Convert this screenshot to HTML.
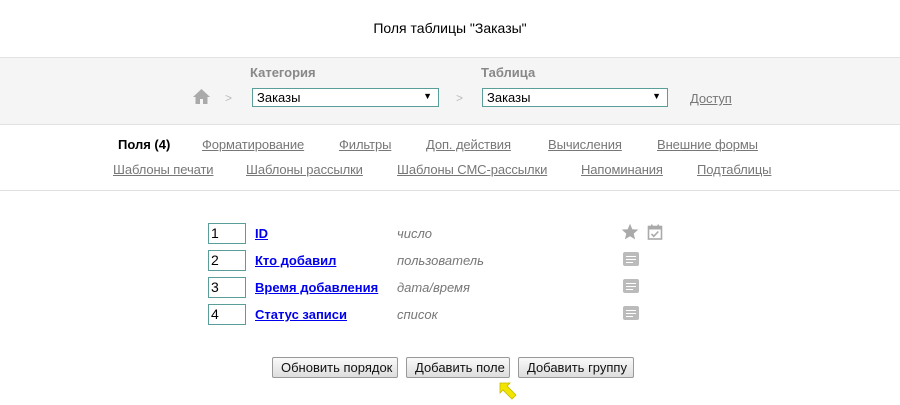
<!DOCTYPE html>
<html><head><meta charset="utf-8"><style>
body{margin:0;width:900px;height:405px;background:#fff;font-family:"Liberation Sans",Arial,sans-serif;position:relative;overflow:hidden}
.a{position:absolute;white-space:nowrap}
.t{font-size:14px;color:#000;left:0;width:900px;text-align:center;top:20px}
.band{left:0;top:57px;width:900px;height:66px;background:#f5f5f5;border-top:1px solid #e2e2e2;border-bottom:1px solid #e2e2e2}
.lbl{font-size:13px;font-weight:bold;color:#888}
.sel{height:19px;border:1px solid #5a9e9a;background:#fff;font-size:13px;box-sizing:border-box;padding:1px 4px}
.sel b{position:absolute;right:6px;top:2px;font-size:9px}
.gt{color:#bbb;font-size:12px}
.lk{font-size:13px;color:#777;text-decoration:underline;letter-spacing:-0.1px}
.hr{left:0;top:190px;width:900px;height:1px;background:#e0e0e0}
.num{width:38px;height:21px;border:1px solid #5a9e9a;box-sizing:border-box;font-size:14px;padding:1px 2px;background:#fff}
.fn{font-size:13px;font-weight:bold;color:#00e;text-decoration:underline}
.ty{font-size:13px;font-style:italic;color:#777}
.btn{height:21px;border:1px solid #999;border-radius:2px;background:linear-gradient(#fafafa,#ddd);font-size:13px;box-sizing:border-box;padding:2px 8px;color:#111}
.nt{width:16px;height:14px;background:#bbb;border-radius:2px}
.nt i{position:absolute;left:3px;height:1px;background:#fff}
</style></head><body>
<div class="a t">Поля таблицы "Заказы"</div>
<div class="a band"></div>
<svg class="a" style="left:193px;top:89px" width="17" height="15" viewBox="0 0 17 15"><path d="M8.5 0L0 8h2.5v7h4.5v-5h3v5h4.5V8H17z" fill="#aaa"/></svg>
<div class="a gt" style="left:225px;top:91px">&gt;</div>
<div class="a lbl" style="left:250px;top:65px">Категория</div>
<div class="a sel" style="left:252px;top:88px;width:187px">Заказы<b>▼</b></div>
<div class="a gt" style="left:456px;top:91px">&gt;</div>
<div class="a lbl" style="left:481px;top:65px">Таблица</div>
<div class="a sel" style="left:482px;top:88px;width:186px">Заказы<b>▼</b></div>
<div class="a lk" style="left:690px;top:91px">Доступ</div>

<div class="a" style="left:118px;top:137px;font-size:13px;font-weight:bold">Поля (4)</div>
<div class="a lk" style="left:202px;top:137px">Форматирование</div>
<div class="a lk" style="left:339px;top:137px">Фильтры</div>
<div class="a lk" style="left:426px;top:137px">Доп. действия</div>
<div class="a lk" style="left:548px;top:137px">Вычисления</div>
<div class="a lk" style="left:657px;top:137px">Внешние формы</div>
<div class="a lk" style="left:113px;top:162px">Шаблоны печати</div>
<div class="a lk" style="left:246px;top:162px">Шаблоны рассылки</div>
<div class="a lk" style="left:397px;top:162px">Шаблоны СМС-рассылки</div>
<div class="a lk" style="left:581px;top:162px">Напоминания</div>
<div class="a lk" style="left:697px;top:162px">Подтаблицы</div>
<div class="a hr"></div>

<div class="a num" style="left:208px;top:223px">1</div>
<div class="a fn" style="left:255px;top:226px">ID</div>
<div class="a ty" style="left:397px;top:226px">число</div>
<div class="a num" style="left:208px;top:250px">2</div>
<div class="a fn" style="left:255px;top:253px">Кто добавил</div>
<div class="a ty" style="left:397px;top:253px">пользователь</div>
<div class="a num" style="left:208px;top:277px">3</div>
<div class="a fn" style="left:255px;top:280px">Время добавления</div>
<div class="a ty" style="left:397px;top:280px">дата/время</div>
<div class="a num" style="left:208px;top:304px">4</div>
<div class="a fn" style="left:255px;top:307px">Статус записи</div>
<div class="a ty" style="left:397px;top:307px">список</div>

<svg class="a" style="left:621px;top:223px" width="18" height="18" viewBox="0 0 24 24"><path d="M12 1l3.1 7.3 7.9.6-6 5.2 1.8 7.7L12 17.7 5.2 21.8 7 14.1 1 8.9l7.9-.6z" fill="#aaa"/></svg>
<svg class="a" style="left:647px;top:224px" width="16" height="16" viewBox="0 0 16 16"><rect x="1.5" y="2.5" width="13" height="12.5" fill="none" stroke="#aaa" stroke-width="1.6"/><rect x="1.5" y="2.5" width="13" height="3" fill="#aaa"/><rect x="4" y="0.5" width="1.6" height="3" fill="#aaa"/><rect x="10.4" y="0.5" width="1.6" height="3" fill="#aaa"/><path d="M4.5 10l2.3 2.3 4.5-4.8" fill="none" stroke="#aaa" stroke-width="1.6"/></svg>
<div class="a nt" style="left:623px;top:252px"><i style="top:4px;width:10px"></i><i style="top:7px;width:10px"></i><i style="top:10px;width:7px"></i></div>
<div class="a nt" style="left:623px;top:279px"><i style="top:4px;width:10px"></i><i style="top:7px;width:10px"></i><i style="top:10px;width:7px"></i></div>
<div class="a nt" style="left:623px;top:306px"><i style="top:4px;width:10px"></i><i style="top:7px;width:10px"></i><i style="top:10px;width:7px"></i></div>

<div class="a btn" style="left:272px;top:357px;width:126px">Обновить порядок</div>
<div class="a btn" style="left:406px;top:357px;width:104px">Добавить поле</div>
<div class="a btn" style="left:518px;top:357px;width:116px">Добавить группу</div>
<svg class="a" style="left:498px;top:381px" width="22" height="22" viewBox="0 0 22 22"><path d="M2 2h10l-3 3 9 9-4 4-9-9-3 3z" fill="#f2e600" stroke="#c8b800" stroke-width="0.8"/></svg>
</body></html>
